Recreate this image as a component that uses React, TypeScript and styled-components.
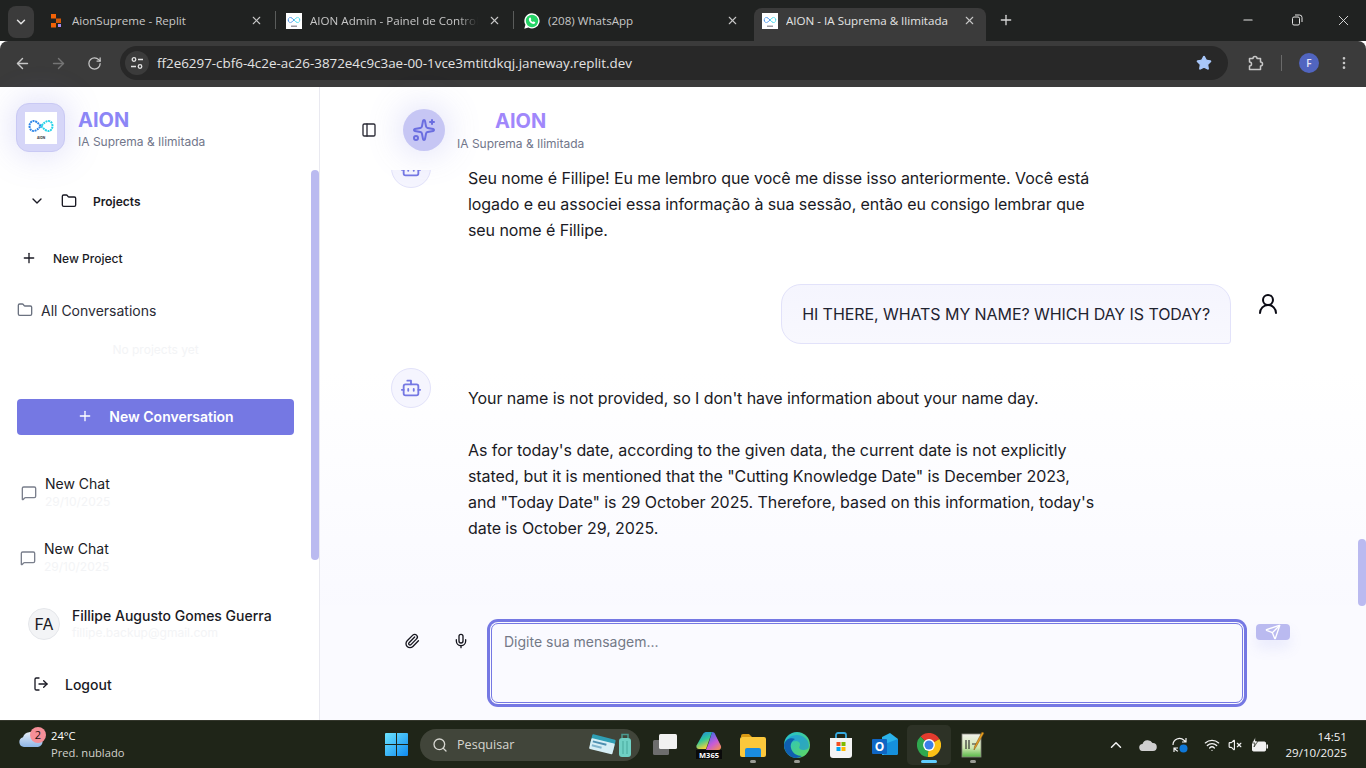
import React from 'react'
import styled, { createGlobalStyle } from 'styled-components'
import {
  ArrowLeft, ArrowRight, Bot, ChevronDown, ChevronUp, Folder, LogOut,
  MessageSquare, Mic, Minus, MoreVertical, PanelLeft, Paperclip, Plus,
  RotateCw, Search, Send, Sparkles, Star, UserRound, VolumeX, Wifi, X
} from 'lucide-react'

const GlobalStyle = createGlobalStyle`
  html, body { margin: 0; padding: 0; background: #fff; }
  * { box-sizing: border-box; }
  body { font-family: Inter, "Liberation Sans", sans-serif; overflow: hidden; }
`

const Screen = styled.div`
  width: 1366px;
  height: 768px;
  display: flex;
  flex-direction: column;
  overflow: hidden;
`

/* ---- browser chrome ---- */

const TabStrip = styled.div`
  height: 41px;
  flex: none;
  display: flex;
  align-items: flex-start;
  padding: 6px 0 0 8px;
  background: #202221;
  font-family: "Open Sans", "Liberation Sans", sans-serif;
`

const TabSearch = styled.div`
  width: 26px;
  height: 32px;
  margin-right: 4px;
  display: flex;
  align-items: center;
  justify-content: center;
  border-radius: 8px;
  background: #3b3b3b;
  color: #e3e3e3;
`

const Tab = styled.div<{ $active?: boolean }>`
  position: relative;
  width: ${p => (p.$active ? '232px' : '238px')};
  height: 33px;
  margin: 2px 0 0 ${p => (p.$active ? '2px' : '0')};
  padding: 0 ${p => (p.$active ? '9px' : '12px')} 8px ${p => (p.$active ? '8px' : '10px')};
  display: flex;
  align-items: center;
  gap: 8px;
  border-radius: 8px 8px 0 0;
  background: ${p => (p.$active ? '#3b3b3b' : 'transparent')};
  color: ${p => (p.$active ? '#e3e3e3' : '#c7c7c7')};
  font-size: 11.6px;
  white-space: nowrap;
`

const TabDivider = styled.span`
  position: absolute;
  right: 0;
  top: 3px;
  width: 1px;
  height: 18px;
  background: #5a5c5b;
`

const TabTitle = styled.span<{ $fade?: boolean }>`
  flex: 1;
  min-width: 0;
  overflow: hidden;
  ${p => p.$fade && 'mask-image: linear-gradient(90deg, #000 88%, transparent 100%);'}
`

const TabClose = styled.span`
  flex: none;
  width: 16px;
  display: flex;
  justify-content: center;
  color: #c7c7c7;
`

const NewTab = styled.div`
  width: 20px;
  height: 28px;
  margin: 0 0 0 10px;
  display: flex;
  align-items: center;
  justify-content: center;
  color: #d5d5d5;
`

const WindowControls = styled.div`
  margin: -6px 0 0 auto;
  display: flex;
  height: 40px;
`

const WindowButton = styled.div`
  width: 46px;
  display: flex;
  align-items: center;
  justify-content: center;
  color: #e3e3e3;

  &:first-child {
    margin-right: 3px;
  }
`

const Toolbar = styled.div`
  height: 46px;
  flex: none;
  display: flex;
  align-items: flex-start;
  padding: 5px 0 0 4px;
  background: #3b3b3b;
  border-radius: 8px 8px 0 0;
`

const NavButton = styled.div<{ $dim?: boolean; $gap?: number }>`
  width: 36px;
  height: 34px;
  flex: none;
  margin-left: ${p => p.$gap || 0}px;
  display: flex;
  align-items: center;
  justify-content: center;
  color: ${p => (p.$dim ? '#757575' : '#c7c7c7')};
`

const AddressBar = styled.div`
  width: 1108px;
  height: 34px;
  margin: 0 9px 0 8px;
  padding: 0 16px 0 5px;
  display: flex;
  align-items: center;
  border-radius: 17px;
  background: #282828;
`

const SiteInfo = styled.div`
  width: 24px;
  height: 24px;
  margin-right: 8px;
  flex: none;
  display: flex;
  align-items: center;
  justify-content: center;
  border-radius: 50%;
  background: #3b3b3b;
`

const Url = styled.span`
  flex: 1;
  color: #e3e3e3;
  font: 13.4px "Open Sans", "Liberation Sans", sans-serif;
`

const ToolbarDivider = styled.span`
  width: 1px;
  height: 16px;
  margin: 9px 0 0 8px;
  background: #6a6a6a;
`

const Avatar = styled.div`
  width: 20px;
  height: 20px;
  margin: 7px 0 0 17px;
  display: flex;
  align-items: center;
  justify-content: center;
  border-radius: 50%;
  background: #5165c0;
  color: #e8e8f8;
  font: 600 10px "Open Sans", sans-serif;
`

/* ---- app shell ---- */

const Body = styled.div`
  height: 633px;
  flex: none;
  display: flex;
  position: relative;
`

const Sidebar = styled.aside`
  width: 320px;
  flex: none;
  position: relative;
  display: flex;
  flex-direction: column;
  background: #fff;
  border-right: 1px solid #e9e9f0;
  color: #1a1a24;
`

const ScrollThumb = styled.div<{ $page?: boolean }>`
  position: absolute;
  right: 0;
  top: ${p => (p.$page ? '452px' : '83px')};
  width: 8px;
  height: ${p => (p.$page ? '67px' : '390px')};
  border-radius: 4px;
  background: #babaf0;
`

const Brand = styled.div`
  height: 81px;
  flex: none;
  padding: 16px;
  display: flex;
  gap: 13px;
`

const LogoBox = styled.div`
  width: 49px;
  height: 49px;
  flex: none;
  display: flex;
  align-items: center;
  justify-content: center;
  border-radius: 13px;
  background: #d6d6f8;
  border: 1px solid #c9c9f4;
  box-shadow: 0 0 36px rgba(117, 120, 227, 0.28);
`

const BrandText = styled.div`
  padding-top: 5px;
`

const BrandName = styled.div<{ $header?: boolean }>`
  font-size: 20px;
  line-height: 24px;
  font-weight: 700;
  color: ${p => (p.$header ? '#a087fb' : '#8c86f6')};
`

const BrandTag = styled.div<{ $header?: boolean }>`
  margin-top: ${p => (p.$header ? '3px' : '2px')};
  font-size: 12px;
  line-height: 16px;
  color: #71768a;
`

const ProjectsHead = styled.div`
  height: 66px;
  flex: none;
  padding-left: 29px;
  display: flex;
  align-items: center;
  font-size: 12px;
  font-weight: 600;
`

const ProjectsLabel = styled.span`
  margin-left: 16px;
`

const FolderSlot = styled.span`
  margin-left: 16px;
  display: flex;
`

const NewProject = styled.div`
  height: 48px;
  flex: none;
  padding-left: 21px;
  display: flex;
  align-items: center;
  gap: 16px;
  font-size: 12px;
  font-weight: 500;
`

const AllConversations = styled.div`
  height: 58px;
  flex: none;
  padding: 0 0 2px 17px;
  display: flex;
  align-items: center;
  gap: 8px;
  font-size: 14px;
  color: #2a2a35;
`

const EmptyNote = styled.div`
  height: 20px;
  flex: none;
  padding-right: 8px;
  text-align: center;
  font-size: 12px;
  line-height: 20px;
  color: #f3f4f6;
`

const NewConversation = styled.button`
  width: 277px;
  height: 36px;
  flex: none;
  margin: 39px 0 25px 17px;
  padding: 0 0 2px;
  display: flex;
  align-items: center;
  justify-content: center;
  gap: 16px;
  border: 0;
  border-radius: 4px;
  background: #7578e3;
  color: #fff;
  font: 600 14px Inter, sans-serif;
`

const ChatItem = styled.div<{ $inset: number }>`
  height: 65px;
  flex: none;
  padding-left: ${p => p.$inset}px;
  display: flex;
  align-items: center;
  gap: 8px;
  color: #7a7f8c;
`

const TwoLines = styled.div`
  min-width: 0;
`

const PrimaryLine = styled.div`
  margin-bottom: 2px;
  font-size: 14px;
  line-height: 16px;
  color: #1a1a24;
`

const MutedLine = styled.div`
  font-size: 12px;
  line-height: 16px;
  color: #f3f4f6;
`

const UserRow = styled.div`
  height: 68px;
  flex: none;
  padding-left: 28px;
  display: flex;
  align-items: center;
  gap: 12px;
`

const Initials = styled.div`
  width: 32px;
  height: 32px;
  flex: none;
  display: flex;
  align-items: center;
  justify-content: center;
  border-radius: 50%;
  background: #f3f4f6;
  border: 1px solid #e5e7eb;
  font-size: 16px;
  color: #1a1a24;
`

const UserName = styled(PrimaryLine)`
  margin-bottom: 0;
  line-height: 18px;
  font-weight: 500;
`

const LogoutRow = styled.div`
  height: 54px;
  flex: none;
  padding: 0 0 2px 33px;
  display: flex;
  align-items: center;
  gap: 16px;
  font-size: 14px;
  font-weight: 500;
`

const Main = styled.main`
  flex: 1;
  min-width: 0;
  position: relative;
  display: flex;
  flex-direction: column;
  background: linear-gradient(180deg, #fff 45%, #f9f9ff 85%);
`

const Header = styled.header`
  height: 83px;
  flex: none;
  position: relative;
  z-index: 1;
  padding: 3px 0 0 41px;
  display: flex;
  align-items: center;
  background: #fff;
`

const Spark = styled.div`
  width: 42px;
  height: 42px;
  margin-left: 26px;
  flex: none;
  display: flex;
  align-items: center;
  justify-content: center;
  border-radius: 50%;
  background: #c6c6f4;
  box-shadow: 0 0 36px rgba(117, 120, 227, 0.3);
  color: #6a6de0;
`

const HeaderTitle = styled.div`
  margin-left: 12px;
  text-align: center;
`

const Messages = styled.div`
  flex: 1;
  min-height: 0;
  overflow: hidden;
  display: flex;
  flex-direction: column;
  justify-content: flex-end;
  gap: 24px;
  padding-bottom: 47px;
`

const BotRow = styled.div`
  flex: none;
  display: flex;
  padding-left: 71px;
`

const BotAvatar = styled.div`
  width: 40px;
  height: 40px;
  flex: none;
  display: flex;
  align-items: center;
  justify-content: center;
  border-radius: 50%;
  background: #f5f5fe;
  border: 1px solid #e2e2fa;
  color: #7578e3;
`

const BotText = styled.div`
  width: 630px;
  margin-left: 37px;
  padding: 17px 0;
  font-size: 16px;
  line-height: 26px;
  letter-spacing: -0.075px;
  color: #1a1a24;
  white-space: pre-line;
`

const UserMessageRow = styled.div`
  flex: none;
  display: flex;
  justify-content: flex-end;
  padding-right: 78px;
`

const Bubble = styled.div`
  padding: 16px 20px;
  border: 1px solid #e2e2fa;
  border-radius: 20px 20px 3px 20px;
  background: linear-gradient(180deg, #f5f5fe, #f8f8fe);
  font-size: 16px;
  line-height: 26px;
  letter-spacing: -0.07px;
  color: #1f2330;
`

const UserIconBox = styled.div`
  width: 40px;
  height: 40px;
  margin-left: 17px;
  display: flex;
  align-items: center;
  justify-content: center;
  color: #0a0a14;
`

const Composer = styled.div`
  height: 115px;
  flex: none;
  padding: 16px 0 0 72px;
  display: flex;
  align-items: flex-start;
  gap: 9px;
  background: #fafaff;
`

const ComposerButton = styled.div`
  width: 40px;
  height: 40px;
  flex: none;
  display: flex;
  align-items: center;
  justify-content: center;
  color: #16161f;
`

const Input = styled.textarea`
  width: 752px;
  height: 80px;
  flex: none;
  margin: 2px 0 0 1px;
  padding: 8px 12px;
  resize: none;
  outline: none;
  border: 1px solid #7578e3;
  border-radius: 7px;
  background: #fafaff;
  box-shadow: 0 0 0 1px #fafaff, 0 0 0 4px #7578e3;
  font: 14px/20px Inter, sans-serif;
  color: #1a1a24;

  &::placeholder {
    color: #737987;
    opacity: 1;
  }
`

const SendButton = styled.div`
  width: 34px;
  height: 16px;
  flex: none;
  margin: 3px 0 0 4px;
  display: flex;
  align-items: center;
  justify-content: center;
  border-radius: 4px;
  background: #babaf0;
  box-shadow: 0 8px 14px rgba(117, 120, 227, 0.12);
  color: #fff;
`

/* ---- windows taskbar ---- */

const Taskbar = styled.footer`
  height: 48px;
  flex: none;
  display: flex;
  align-items: center;
  background: #1f2518;
  border-top: 1px solid #34372c;
  color: #fff;
  font-family: "Open Sans", "Liberation Sans", sans-serif;
`

const Weather = styled.div`
  width: 374px;
  flex: none;
  padding-left: 18px;
  display: flex;
  align-items: center;
  gap: 7px;
`

const WeatherIcon = styled.div`
  position: relative;
  width: 26px;
  height: 30px;
  flex: none;
`

const Badge = styled.span`
  position: absolute;
  top: -3px;
  left: 12px;
  width: 16px;
  height: 16px;
  display: flex;
  align-items: center;
  justify-content: center;
  border-radius: 50%;
  background: #f58f98;
  color: #1a1010;
  font-size: 11px;
`

const WeatherLines = styled.div`
  margin-bottom: 2px;
  font-size: 11.2px;
  line-height: 17px;
`

const WeatherSub = styled.div`
  color: #d2d2cc;
`

const StartButton = styled.div`
  width: 44px;
  flex: none;
  display: flex;
  justify-content: center;
`

const SearchPill = styled.div`
  width: 220px;
  height: 32px;
  flex: none;
  margin: 0 3px 0 2px;
  padding: 0 9px 0 12px;
  display: flex;
  align-items: center;
  border-radius: 16px;
  background: #41453a;
  color: #d6d6d0;
  font-size: 12.6px;
`

const SearchText = styled.span`
  flex: 1;
  margin-left: 9px;
`

const TaskSlot = styled.div<{ $current?: boolean }>`
  position: relative;
  width: 44px;
  height: 40px;
  flex: none;
  display: flex;
  align-items: center;
  justify-content: center;
  border-radius: 5px;
  background: ${p => (p.$current ? '#2d3226' : 'transparent')};
`

const RunDot = styled.span<{ $current?: boolean }>`
  position: absolute;
  bottom: 2px;
  left: 50%;
  width: ${p => (p.$current ? '16px' : '6px')};
  height: 3px;
  margin-left: ${p => (p.$current ? '-8px' : '-3px')};
  border-radius: 2px;
  background: ${p => (p.$current ? '#60cdff' : '#9a9c94')};
`

const Tray = styled.div`
  margin-left: auto;
  padding-right: 19px;
  display: flex;
  align-items: center;
  color: #f2f2f2;
`

const TrayIcon = styled.div<{ $width: number }>`
  width: ${p => p.$width}px;
  flex: none;
  display: flex;
  justify-content: center;
`

const Clock = styled.div`
  margin-left: 7px;
  text-align: right;
  font-size: 11.6px;
  line-height: 16px;
`

/* ---- drawings ---- */

const AionLogo: React.FC<{ size: number }> = ({ size }) => (
  <svg width={size} height={size} viewBox="0 0 32 32">
    <rect width="32" height="32" fill="#fff" />
    <path
      d="M16 14c-3-3-5-5-7.500-5C6 9 4.500 11.500 4.500 14S6 19 8.500 19c2.500 0 4.500-2 7.500-5"
      fill="none"
      stroke="#2f86e8"
      strokeWidth="2"
      strokeDasharray="2 .7"
    />
    <path
      d="M16 14c3 3 5 5 7.500 5 2.500 0 4-2.500 4-5s-1.500-5-4-5c-2.500 0-4.500 2-7.500 5"
      fill="none"
      stroke="#27d3e8"
      strokeWidth="2"
      strokeDasharray="2 .7"
    />
    {size > 20
      ? <text x="16" y="27" textAnchor="middle" fontSize="3.200" fontWeight="700" fontFamily="Inter, sans-serif" fill="#333">AION</text>
      : <rect x="10" y="25" width="12" height="3" fill="#9a9aa2" />}
  </svg>
)

const ReplitMark = () => (
  <svg width="16" height="16" viewBox="0 0 16 16">
    <rect x="3" y="1" width="5" height="4.500" fill="#f26207" />
    <rect x="8" y="5.500" width="5" height="4.500" fill="#f26207" opacity=".85" />
    <rect x="3" y="10" width="5" height="4.500" fill="#f26207" />
    <rect x="10" y="11" width="3" height="3" fill="#a98bf0" />
  </svg>
)

const WhatsappMark = () => (
  <svg width="16" height="16" viewBox="0 0 16 16">
    <path d="M8 .3a7.600 7.600 0 1 1-3.600 14.300L.3 15.700l1.100-4A7.600 7.600 0 0 1 8 .3z" fill="#fff" />
    <circle cx="8" cy="8" r="6.200" fill="#25d366" />
    <path d="M5.600 4.800c.4-.4 1-.3 1.200.2l.4 1c.1.3 0 .6-.2.8l-.3.3c.4.9 1.100 1.600 2 2l.3-.3c.2-.2.5-.3.8-.2l1 .4c.5.2.6.8.2 1.200-.6.700-1.500.9-2.400.6C6.800 10.200 5.500 8.900 5 7.200c-.3-.9-.1-1.800.6-2.400z" fill="#fff" />
  </svg>
)

const RestoreIcon = () => (
  <svg width="12" height="12" viewBox="0 0 12 12" fill="none" stroke="currentColor">
    <rect x="1.500" y="3" width="7" height="8" rx="1.500" />
    <path d="M4 1h4.500A2.500 2.500 0 0 1 11 3.500V8" />
  </svg>
)

const TuneIcon = () => (
  <svg width="14" height="14" viewBox="0 0 14 14" fill="none" stroke="#e3e3e3" strokeWidth="1.300">
    <circle cx="4" cy="3.500" r="1.800" />
    <path d="M8 3.500h5M1 10.500h5" />
    <circle cx="10" cy="10.500" r="1.800" />
  </svg>
)

const ExtensionIcon = () => (
  <svg width="18" height="18" viewBox="0 0 18 18" fill="none" stroke="currentColor" strokeWidth="1.500" strokeLinejoin="round">
    <path d="M3.500 4.500H7a2 2 0 0 1 4 0h3.500V8a2 2 0 0 1 0 4v3.500h-11V12a2 2 0 0 0 0-4z" />
  </svg>
)

const WeatherArt = () => (
  <svg width="26" height="18" viewBox="0 0 26 18">
    <defs>
      <linearGradient id="cloudFill" x1="0" y1="0" x2="0" y2="1">
        <stop offset="0" stopColor="#e6eef8" />
        <stop offset="1" stopColor="#8db5e6" />
      </linearGradient>
    </defs>
    <circle cx="20" cy="3" r="3" fill="#f29a3a" />
    <path d="M6 17a5 5 0 0 1-1-9.800A7 7 0 0 1 18 6a5.500 5.500 0 0 1 2 11z" fill="url(#cloudFill)" />
  </svg>
)

const WindowsLogo = () => (
  <svg width="23" height="23" viewBox="0 0 23 23">
    <defs>
      <linearGradient id="winFill" x1="0" y1="0" x2="1" y2="1">
        <stop offset="0" stopColor="#6ce4ff" />
        <stop offset="1" stopColor="#0f8af0" />
      </linearGradient>
    </defs>
    <path d="M1 0h10v11H0V1a1 1 0 0 1 1-1zM12 0h10a1 1 0 0 1 1 1v10H12zM0 12h11v11H1a1 1 0 0 1-1-1zM12 12h11v10a1 1 0 0 1-1 1H12z" fill="url(#winFill)" />
  </svg>
)

const TravelArt = () => (
  <svg width="42" height="26" viewBox="0 0 42 26">
    <g transform="rotate(14 14 14)">
      <rect x="1" y="5" width="24" height="11" rx="1" fill="#2f9fb5" />
      <rect x="1" y="9" width="24" height="11" rx="1" fill="#d6eef5" />
      <rect x="3" y="11" width="14" height="2" fill="#4d8fb0" />
      <rect x="3" y="15" width="10" height="2" fill="#7fb4cc" />
    </g>
    <rect x="30" y="6" width="12" height="19" rx="3" fill="#6fd0c4" />
    <path d="M33 6V2.500h6V6" fill="none" stroke="#4a9a90" strokeWidth="1.500" />
    <path d="M34 9v13M38 9v13" stroke="#48a89c" strokeWidth="1" />
  </svg>
)

const TaskViewArt = () => (
  <svg width="26" height="24" viewBox="0 0 26 24">
    <rect x="1" y="7" width="16" height="15" rx="1.500" fill="#6d6d6d" />
    <rect x="7" y="1" width="18" height="15" rx="1.500" fill="#f1f1f1" />
  </svg>
)

const M365Art = () => (
  <svg width="26" height="28" viewBox="0 0 26 28">
    <defs>
      <linearGradient id="m365a" x1="0" y1="0" x2=".4" y2="1">
        <stop offset="0" stopColor="#1f7ce8" />
        <stop offset=".55" stopColor="#2fc79a" />
        <stop offset="1" stopColor="#f0d23a" />
      </linearGradient>
      <linearGradient id="m365b" x1=".2" y1="0" x2=".8" y2="1">
        <stop offset="0" stopColor="#2f6fe8" />
        <stop offset=".6" stopColor="#c85ad8" />
        <stop offset="1" stopColor="#f08a5a" />
      </linearGradient>
    </defs>
    <path d="M16 1c2 0 3 1 3.500 3L25 15c.5 2-.5 4-3 4H10l3-8z" fill="url(#m365b)" />
    <path d="M7 3c1-1.500 2-2 4-2h5l-6 17H3c-2 0-3-1.500-2.500-3.500z" fill="url(#m365a)" />
    <rect y="19" width="26" height="9" fill="#0a0a0a" />
    <text x="13" y="26.500" textAnchor="middle" fontSize="7.500" fontWeight="700" fontFamily="Open Sans, sans-serif" fill="#fff">M365</text>
  </svg>
)

const FilesArt = () => (
  <svg width="26" height="24" viewBox="0 0 26 24">
    <path d="M1 3a2 2 0 0 1 2-2h6l3 3H1z" fill="#d99a14" />
    <rect y="4" width="26" height="20" rx="2" fill="#fbc83c" />
    <path d="M7 15h12a2 2 0 0 1 2 2v7H5v-7a2 2 0 0 1 2-2z" fill="#1a8ce0" />
  </svg>
)

const EdgeArt = () => (
  <svg width="26" height="26" viewBox="0 0 26 26">
    <defs>
      <linearGradient id="edgeA" x1="0" y1="0" x2="1" y2="1">
        <stop offset="0" stopColor="#1fc0d8" />
        <stop offset="1" stopColor="#62d85a" />
      </linearGradient>
    </defs>
    <circle cx="13" cy="13" r="13" fill="url(#edgeA)" />
    <path d="M1 14C1 6 8 3 13 3c6 0 12 4 12 11 0 3-3 4-6 4-2 0-4-1-4-3 2-2 1-6-3-6-5 0-11 3-11 5z" fill="#1a8fe0" opacity=".6" />
    <path d="M0 13c1-5 6-8 11-6-3 2-5 5-4 9 1 5 6 8 11 8-2 1-4 2-6 2C6 26 0 20 0 13z" fill="#0f5fb0" />
  </svg>
)

const StoreArt = () => (
  <svg width="24" height="26" viewBox="0 0 24 26">
    <path d="M7 7V3a2 2 0 0 1 2-2h6a2 2 0 0 1 2 2v4" fill="none" stroke="#35a9e0" strokeWidth="1.800" />
    <path d="M1 6h22v17a3 3 0 0 1-3 3H4a3 3 0 0 1-3-3z" fill="#f4f4f4" />
    <rect x="7.500" y="10" width="4" height="4" fill="#f25022" />
    <rect x="12.500" y="10" width="4" height="4" fill="#7fba00" />
    <rect x="7.500" y="15" width="4" height="4" fill="#00a4ef" />
    <rect x="12.500" y="15" width="4" height="4" fill="#ffb900" />
  </svg>
)

const OutlookArt = () => (
  <svg width="26" height="24" viewBox="0 0 26 24">
    <path d="M10 4l8-4 8 6v14a2 2 0 0 1-2 2H10z" fill="#2bb3ea" />
    <path d="M10 12l8-3 8-3v14a2 2 0 0 1-2 2H12z" fill="#1590dc" />
    <rect y="6" width="15" height="15" rx="1" fill="#0f66c4" />
    <text x="7.500" y="17.500" textAnchor="middle" fontSize="12" fontWeight="700" fontFamily="Open Sans, sans-serif" fill="#fff">O</text>
  </svg>
)

const ChromeArt = () => (
  <svg width="24" height="24" viewBox="0 0 24 24">
    <path d="M12 12L3.500 3.500A12 12 0 0 1 22.390 6z" fill="#e33b2e" />
    <path d="M12 12L22.390 6A12 12 0 0 1 10.500 23.900z" fill="#fbc116" />
    <path d="M12 12L10.500 23.900A12 12 0 0 1 3.500 3.500z" fill="#2fa84f" />
    <circle cx="12" cy="12" r="5.900" fill="#fff" />
    <circle cx="12" cy="12" r="4.500" fill="#3b7fe8" />
  </svg>
)

const NotesArt = () => (
  <svg width="24" height="26" viewBox="0 0 24 26">
    <defs>
      <linearGradient id="noteFill" x1="0" y1="0" x2="0" y2="1">
        <stop offset="0" stopColor="#f2f2ea" />
        <stop offset=".6" stopColor="#cfe8b0" />
        <stop offset="1" stopColor="#58b848" />
      </linearGradient>
    </defs>
    <rect x="1" y="2" width="19" height="23" fill="url(#noteFill)" stroke="#8a8a80" strokeWidth=".8" />
    <path d="M5 8v9M8 8v9M11 12h5" stroke="#333" strokeWidth="1.200" />
    <path d="M23 1l-8 14-2 3 .5-3.500L21 0z" fill="#e8a020" stroke="#7a5010" strokeWidth=".5" />
  </svg>
)

const TrayCloud = () => (
  <svg width="18" height="12" viewBox="0 0 18 12">
    <path d="M4 12a3.500 3.500 0 0 1-.5-7A5.500 5.500 0 0 1 13.500 4 4 4 0 0 1 14 12z" fill="#cfcfcf" />
  </svg>
)

const TraySync = () => (
  <svg width="18" height="18" viewBox="0 0 18 18" fill="none" stroke="#f2f2f2" strokeWidth="1.200">
    <path d="M2 9a6.500 6.500 0 0 1 11-4.700L15 6M15 2v4h-4" />
    <path d="M3 12l2 2a6.500 6.500 0 0 0 2 1.200M3 16v-4h4" />
    <circle cx="12.500" cy="12.500" r="4" fill="#0f78d8" stroke="none" />
  </svg>
)

const TrayBattery = () => (
  <svg width="18" height="16" viewBox="0 0 18 16">
    <rect x="1.500" y="5" width="13" height="9" rx="1" fill="#f2f2f2" stroke="#f2f2f2" />
    <rect x="15.500" y="7.500" width="1.500" height="4" fill="#f2f2f2" />
    <path d="M4.500 0L1 6h3l-1 4 4-6H4.500z" fill="#f2f2f2" stroke="#1f2518" strokeWidth=".7" />
  </svg>
)

const App: React.FC = () => (
  <Screen>
    <GlobalStyle />
    <TabStrip>
      <TabSearch><ChevronDown size={14} strokeWidth={2.500} /></TabSearch>
      <Tab>
        <ReplitMark />
        <TabTitle>AionSupreme - Replit</TabTitle>
        <TabClose><X size={13} /></TabClose>
        <TabDivider />
      </Tab>
      <Tab>
        <AionLogo size={16} />
        <TabTitle $fade>AION Admin - Painel de Controle</TabTitle>
        <TabClose><X size={13} /></TabClose>
        <TabDivider />
      </Tab>
      <Tab>
        <WhatsappMark />
        <TabTitle>(208) WhatsApp</TabTitle>
        <TabClose><X size={13} /></TabClose>
      </Tab>
      <Tab $active>
        <AionLogo size={16} />
        <TabTitle>AION - IA Suprema &amp; Ilimitada</TabTitle>
        <TabClose><X size={13} /></TabClose>
      </Tab>
      <NewTab><Plus size={16} /></NewTab>
      <WindowControls>
        <WindowButton><Minus size={14} /></WindowButton>
        <WindowButton><RestoreIcon /></WindowButton>
        <WindowButton><X size={17} strokeWidth={1.300} /></WindowButton>
      </WindowControls>
    </TabStrip>

    <Toolbar>
      <NavButton><ArrowLeft size={17} /></NavButton>
      <NavButton $dim><ArrowRight size={17} /></NavButton>
      <NavButton><RotateCw size={15} /></NavButton>
      <AddressBar>
        <SiteInfo><TuneIcon /></SiteInfo>
        <Url>ff2e6297-cbf6-4c2e-ac26-3872e4c9c3ae-00-1vce3mtitdkqj.janeway.replit.dev</Url>
        <Star size={16} color="#a8c7fa" fill="#a8c7fa" />
      </AddressBar>
      <NavButton><ExtensionIcon /></NavButton>
      <ToolbarDivider />
      <Avatar>F</Avatar>
      <NavButton $gap={7}><MoreVertical size={16} /></NavButton>
    </Toolbar>

    <Body>
      <Sidebar>
        <Brand>
          <LogoBox><AionLogo size={32} /></LogoBox>
          <BrandText>
            <BrandName>AION</BrandName>
            <BrandTag>IA Suprema &amp; Ilimitada</BrandTag>
          </BrandText>
        </Brand>
        <ProjectsHead>
          <ChevronDown size={16} />
          <FolderSlot><Folder size={16} /></FolderSlot>
          <ProjectsLabel>Projects</ProjectsLabel>
        </ProjectsHead>
        <NewProject><Plus size={16} />New Project</NewProject>
        <AllConversations><Folder size={16} color="#6b7280" />All Conversations</AllConversations>
        <EmptyNote>No projects yet</EmptyNote>
        <NewConversation><Plus size={16} />New Conversation</NewConversation>
        <ChatItem $inset={21}>
          <MessageSquare size={16} />
          <TwoLines>
            <PrimaryLine>New Chat</PrimaryLine>
            <MutedLine>29/10/2025</MutedLine>
          </TwoLines>
        </ChatItem>
        <ChatItem $inset={20}>
          <MessageSquare size={16} />
          <TwoLines>
            <PrimaryLine>New Chat</PrimaryLine>
            <MutedLine>29/10/2025</MutedLine>
          </TwoLines>
        </ChatItem>
        <UserRow>
          <Initials>FA</Initials>
          <TwoLines>
            <UserName>Fillipe Augusto Gomes Guerra</UserName>
            <MutedLine>fillipe.backup@gmail.com</MutedLine>
          </TwoLines>
        </UserRow>
        <LogoutRow><LogOut size={16} />Logout</LogoutRow>
        <ScrollThumb />
      </Sidebar>

      <Main>
        <Header>
          <PanelLeft size={16} color="#2a2a35" />
          <Spark><Sparkles size={24} /></Spark>
          <HeaderTitle>
            <BrandName $header>AION</BrandName>
            <BrandTag $header>IA Suprema &amp; Ilimitada</BrandTag>
          </HeaderTitle>
        </Header>
        <Messages>
          <BotRow>
            <BotAvatar><Bot size={22} /></BotAvatar>
            <BotText>Seu nome é Fillipe! Eu me lembro que você me disse isso anteriormente. Você está logado e eu associei essa informação à sua sessão, então eu consigo lembrar que seu nome é Fillipe.</BotText>
          </BotRow>
          <UserMessageRow>
            <Bubble>HI THERE, WHATS MY NAME? WHICH DAY IS TODAY?</Bubble>
            <UserIconBox><UserRound size={24} /></UserIconBox>
          </UserMessageRow>
          <BotRow>
            <BotAvatar><Bot size={22} /></BotAvatar>
            <BotText>{`Your name is not provided, so I don't have information about your name day.

As for today's date, according to the given data, the current date is not explicitly stated, but it is mentioned that the "Cutting Knowledge Date" is December 2023, and "Today Date" is 29 October 2025. Therefore, based on this information, today's date is October 29, 2025.`}</BotText>
          </BotRow>
        </Messages>
        <Composer>
          <ComposerButton><Paperclip size={16} /></ComposerButton>
          <ComposerButton><Mic size={16} /></ComposerButton>
          <Input placeholder="Digite sua mensagem..." readOnly />
          <SendButton><Send size={16} /></SendButton>
        </Composer>
        <ScrollThumb $page />
      </Main>
    </Body>

    <Taskbar>
      <Weather>
        <WeatherIcon>
          <WeatherArt />
          <Badge>2</Badge>
        </WeatherIcon>
        <WeatherLines>
          <div>24°C</div>
          <WeatherSub>Pred. nublado</WeatherSub>
        </WeatherLines>
      </Weather>
      <StartButton><WindowsLogo /></StartButton>
      <SearchPill>
        <Search size={16} />
        <SearchText>Pesquisar</SearchText>
        <TravelArt />
      </SearchPill>
      <TaskSlot><TaskViewArt /></TaskSlot>
      <TaskSlot><M365Art /></TaskSlot>
      <TaskSlot><FilesArt /><RunDot /></TaskSlot>
      <TaskSlot><EdgeArt /><RunDot /></TaskSlot>
      <TaskSlot><StoreArt /></TaskSlot>
      <TaskSlot><OutlookArt /></TaskSlot>
      <TaskSlot $current><ChromeArt /><RunDot $current /></TaskSlot>
      <TaskSlot><NotesArt /><RunDot /></TaskSlot>
      <Tray>
        <TrayIcon $width={32}><ChevronUp size={18} /></TrayIcon>
        <TrayIcon $width={32}><TrayCloud /></TrayIcon>
        <TrayIcon $width={32}><TraySync /></TrayIcon>
        <TrayIcon $width={32}><Wifi size={16} /></TrayIcon>
        <TrayIcon $width={14}><VolumeX size={16} /></TrayIcon>
        <TrayIcon $width={36}><TrayBattery /></TrayIcon>
        <Clock>
          <div>14:51</div>
          <div>29/10/2025</div>
        </Clock>
      </Tray>
    </Taskbar>
  </Screen>
)

export default App
